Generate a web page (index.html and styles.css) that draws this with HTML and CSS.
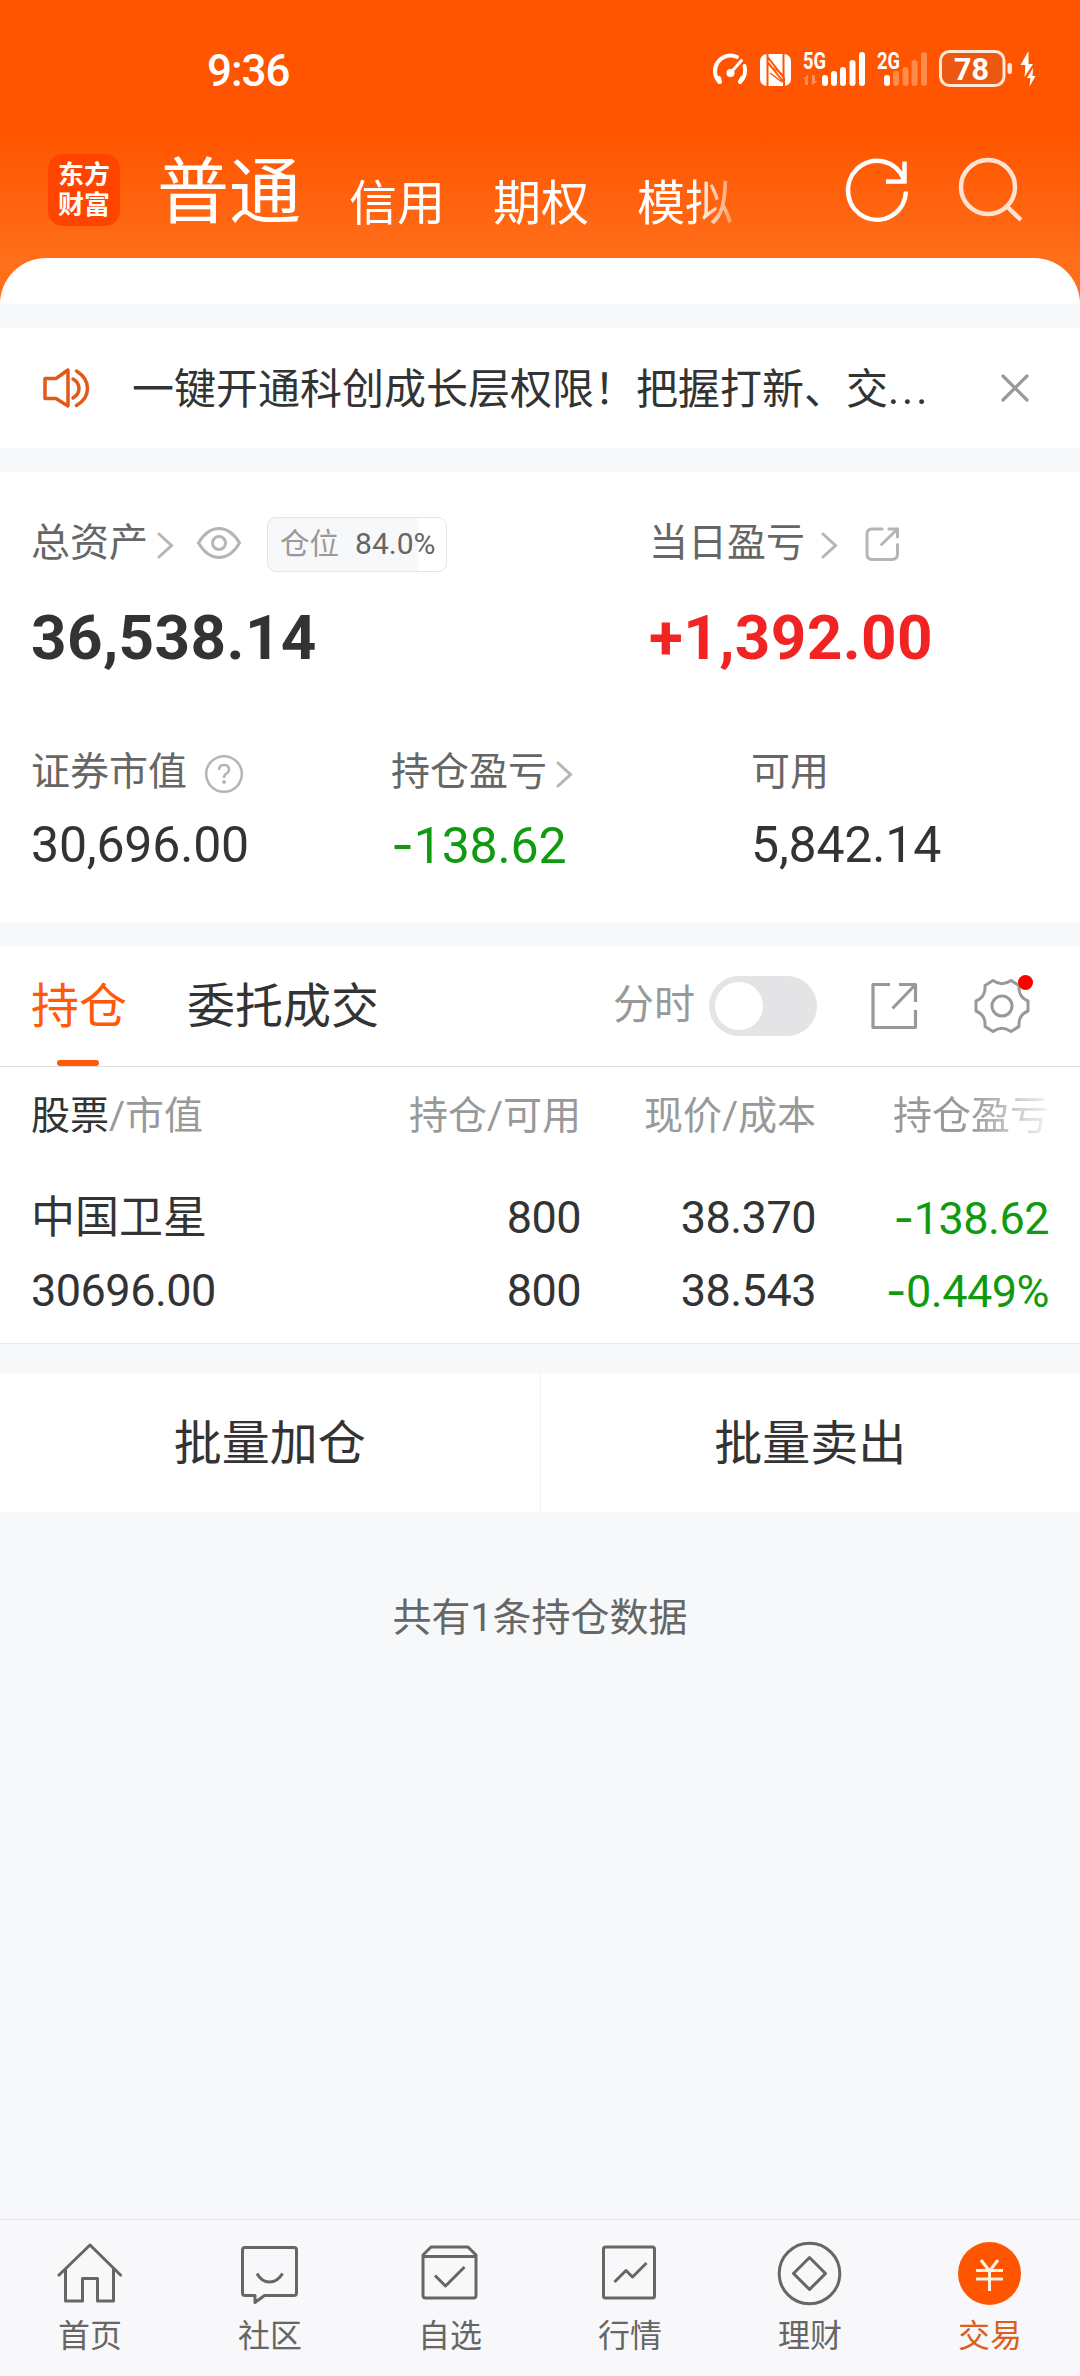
FILE: index.html
```html
<!DOCTYPE html>
<html lang="zh-CN">
<head>
<meta charset="utf-8">
<title>交易</title>
<link rel="stylesheet" href="styles.css">
</head>
<body>
<div class="page">
  <div class="header">
    <div class="status">
      <span class="time">9:36</span>
      <svg class="status-icons" viewBox="710 48 330 42" width="330" height="42">
        <g fill="none" stroke="#fff" stroke-width="4" stroke-linecap="round">
          <path d="M719.5 82A15.5 15.5 0 0 1 737 57"/>
          <path d="M744.500 66A15.500 15.500 0 0 1 740 82"/>
          <path d="M730 73.500L741.500 60.500" stroke-width="3"/>
          <path d="M719 78l1 4M742 78l-2 4"/>
        </g>
        <circle cx="730.500" cy="73" r="4" fill="#fff"/>
        <rect x="760" y="54" width="31" height="32" rx="7" fill="#fff"/>
        <path d="M767.500 86V57L784 78V86M783.500 54V82L767.500 62V54" fill="none" stroke="#ff5500" stroke-width="2"/>
        <path d="M770 66l12 8M770 73l12 9" stroke="#ff5500" stroke-width="1.500"/>
        <text x="803" y="69" class="net" textLength="23" lengthAdjust="spacingAndGlyphs">5G</text>
        <path d="M808 75v10h-3v-6h-2zM812 85V75h3v6h3z" fill="#fff" opacity=".35"/>
        <g stroke="#fff" stroke-width="6" stroke-linecap="round">
          <path d="M825 78v5M834 74v9M843 70v13M852.500 63v20M862 55v28"/>
          <path d="M887 78v5"/>
        </g>
        <text x="877" y="69" class="net" textLength="23" lengthAdjust="spacingAndGlyphs">2G</text>
        <path d="M896 74v9M905.500 70v13M914.500 63v20M924 55v28" stroke="#ff8b4d" stroke-width="6" stroke-linecap="round"/>
        <rect x="940.500" y="51.500" width="63.500" height="34" rx="9" fill="#dc5a1c" fill-opacity=".6" stroke="#ffe8d5" stroke-width="3"/>
        <text x="954" y="80" class="bat" textLength="35" lengthAdjust="spacingAndGlyphs">78</text>
        <rect x="1007.500" y="63" width="4.500" height="11" rx="2" fill="#ffe8d5"/>
        <path d="M1028.500 51l-8 14h5l-1 12 8.500-13h-4.500zM1033 68l-6 10h3.500l-1 8.500 6-10.500h-3z" fill="#fff"/>
      </svg>
    </div>
    <div class="topbar">
      <div class="logo">东方<br>财富</div>
      <div class="accounts">
        <span class="on">普通</span>
        <span>信用</span>
        <span>期权</span>
        <span>模拟</span>
      </div>
      <svg class="refresh" viewBox="0 0 68 68" width="68" height="68" fill="none" stroke="#fff" stroke-width="4.500">
        <path d="M63 34.500A29 29.500 0 1 1 61 22.500"/>
        <path d="M61.500 4.500V24.500H43"/>
      </svg>
      <svg class="search" viewBox="0 0 68 68" width="68" height="68" fill="none" stroke="#ffe2cf" stroke-width="4.500">
        <circle cx="31" cy="30" r="27"/>
        <path d="M50.500 50L64 63"/>
      </svg>
    </div>
    <div class="sheet"></div>
  </div>

  <div class="notice">
    <svg viewBox="0 0 48 44" width="48" height="44" fill="none" stroke="#e25a1b" stroke-width="3.500" stroke-linecap="round" stroke-linejoin="round">
      <path d="M3 12.500H14L26 4V40L14 32.500H3z"/>
      <path d="M31 13Q37 16.500 37 22.500T31 32"/>
      <path d="M34.500 5Q45.500 12 45.500 22.500T34.500 39.500"/>
    </svg>
    <span class="notice-text">一键开通科创成长层权限！把握打新、交<span class="dots">...</span></span>
    <svg class="close" viewBox="0 0 30 30" width="30" height="30" stroke="#999" stroke-width="3.200" stroke-linecap="round"><path d="M3 3L27 27M27 3L3 27"/></svg>
  </div>

  <div class="assets">
    <div class="total">
      <div class="col">
        <div class="label">总资产
          <svg class="chev" viewBox="0 0 18 28" width="18" height="28"><path d="M3 3L15.500 14.500L3 26"/></svg>
          <svg class="eye" viewBox="0 0 46 34" width="46" height="34" fill="none" stroke="#b5b5b5" stroke-width="3">
            <path d="M2.500 17Q11 2.500 23 2.500T43.500 17Q35 31.500 23 31.500T2.500 17z"/>
            <circle cx="23" cy="17" r="6.500"/>
          </svg>
          <span class="ratio">仓位<b>84.0%</b></span>
        </div>
        <div class="big">36,538.14</div>
      </div>
      <div class="col">
        <div class="label">当日盈亏
          <svg class="chev wide" viewBox="0 0 18 28" width="18" height="28"><path d="M3 3L15.500 14.500L3 26"/></svg>
          <svg class="share-sm" viewBox="0 0 36 36" width="36" height="36" fill="none" stroke="#b5b5b5" stroke-width="3" stroke-linecap="round">
            <path d="M18 3H8Q3 3 3 8V28Q3 33.500 8 33.500H28Q33.500 33.500 33.500 28V18.500"/>
            <path d="M25 3H33.500V11M33 3.500L17.500 18.500"/>
          </svg>
        </div>
        <div class="big red">+1,392.00</div>
      </div>
    </div>
    <div class="detail">
      <div>
        <div class="label">证券市值
          <svg class="help" viewBox="0 0 40 40" width="40" height="40">
            <circle cx="20" cy="20" r="17.800" fill="none" stroke="#b5b5b5" stroke-width="2.500"/>
            <path d="M15 16Q15 11 20 11T25 15.500Q25 18 22.500 19.500T20 24" fill="none" stroke="#b5b5b5" stroke-width="2.500"/>
            <circle cx="20" cy="28" r="1.900" fill="#b5b5b5"/>
          </svg>
        </div>
        <div class="num">30,696.00</div>
      </div>
      <div>
        <div class="label">持仓盈亏<svg class="chev" viewBox="0 0 18 28" width="18" height="28"><path d="M3 3L15.500 14.500L3 26"/></svg></div>
        <div class="num green"><i>-</i>138.62</div>
      </div>
      <div>
        <div class="label">可用</div>
        <div class="num">5,842.14</div>
      </div>
    </div>
  </div>

  <div class="holdings">
    <div class="tabs">
      <span class="tab active">持仓</span>
      <span class="tab">委托成交</span>
      <span class="switch-label">分时</span>
      <span class="switch"></span>
      <svg class="share" viewBox="0 0 50 50" width="50" height="50" fill="none" stroke="#999" stroke-width="3.200" stroke-linejoin="round">
        <path d="M20 3.500H3V46.500H45.500V29"/>
        <path d="M29 3.500H45.500V21M45 4L22.500 27.500"/>
      </svg>
      <span class="gear">
        <svg viewBox="0 0 56 56" width="56" height="56" fill="none" stroke="#999" stroke-width="3" stroke-linejoin="round">
          <path d="M19 2.500Q28 9 37 2.500L45 7.500Q44 19 54 23V33Q44 37 45 48.500L37 53.500Q28 47 19 53.500L11 48.500Q12 37 2 33V23Q12 19 11 7.500z"/>
          <circle cx="28" cy="28" r="10"/>
        </svg>
      </span>
    </div>
    <div class="grid head">
      <span><em>股票</em>/市值</span><span>持仓/可用</span><span>现价/成本</span><span class="fade">持仓盈亏</span>
    </div>
    <div class="grid row">
      <span class="name">中国卫星</span><span>800</span><span>38.370</span><span class="green"><i>-</i>138.62</span>
      <span>30696.00</span><span>800</span><span>38.543</span><span class="green"><i>-</i>0.449%</span>
    </div>
  </div>

  <div class="batch">
    <span>批量加仓</span>
    <span>批量卖出</span>
  </div>
  <div class="summary">共有1条持仓数据</div>

  <div class="nav">
    <div class="item">
      <svg viewBox="0 0 66 66"><path d="M1 36L33 5L64.500 36"/><path d="M8.500 29V61H25.500V38.500H40.500V61H56.500V29"/></svg>
      首页
    </div>
    <div class="item">
      <svg viewBox="0 0 66 66"><path d="M8 7.500H57Q59.500 7.500 59.500 10V53Q59.500 55.500 57 55.500H27.500L18 62.500V55.500H8Q5.500 55.500 5.500 53V10Q5.500 7.500 8 7.500z"/><path d="M20 33.500Q24.500 42 32.500 42T45.500 33.500"/></svg>
      社区
    </div>
    <div class="item">
      <svg viewBox="0 0 66 66"><path d="M6 15L14 7H51L59 15V55Q59 58 56.500 58H8.500Q6 58 6 55zM6 16.500H59M18 35.500L28.500 46L47.500 27"/></svg>
      自选
    </div>
    <div class="item">
      <svg viewBox="0 0 66 66"><rect x="6.500" y="7" width="51" height="51" rx="2"/><path d="M17.500 42L29 30.500L35.500 37L49.500 23"/></svg>
      行情
    </div>
    <div class="item">
      <svg viewBox="0 0 66 66"><circle cx="32.500" cy="33.500" r="30.300"/><path d="M32.500 17.500L48.500 33.500L32.500 49.500L16.500 33.500z"/></svg>
      理财
    </div>
    <div class="item current">
      <svg viewBox="0 0 66 66"><circle class="disc" cx="32.500" cy="33.500" r="31.500"/><path class="yen" d="M24 20L32.500 31L41 20M19 30.500H46M19 39H46M32.500 30V51"/></svg>
      交易
    </div>
  </div>
</div>
</body>
</html>
```

FILE: styles.css
```css
*
{
    box-sizing: border-box;
}

body
{
    margin: 0;
    background: #f7f8fa;
    font-family: Roboto, "Noto Sans CJK SC", sans-serif;
    color: #333;
}

svg
{
    display: block;
    flex: none;
}

i
{
    font-family: Inter, sans-serif;
    font-style: normal;
}

em
{
    font-style: normal;
    color: #333;
}

.page
{
    width: 1080px;
    height: 2376px;
    display: flex;
    flex-direction: column;
    overflow: hidden;
    white-space: nowrap;
}

/* header */

.header
{
    height: 304px;
    background: linear-gradient(#ff5500 0, #ff5500 135px, #ff6e1a 258px, #ff701c 304px);
    color: #fff;
}

.status
{
    height: 118px;
    padding: 48px 40px 0 207px;
    display: flex;
    justify-content: space-between;
}

.time
{
    font-size: 44px;
    font-weight: 500;
    line-height: 46px;
    letter-spacing: -1px;
}

.net
{
    font-size: 23px;
    font-weight: 700;
    fill: #fff;
}

.bat
{
    font-size: 32px;
    font-weight: 700;
    fill: #fff;
}

.topbar
{
    height: 140px;
    padding-left: 48px;
    display: flex;
}

.logo
{
    width: 72px;
    height: 72px;
    margin-top: 36px;
    padding-top: 6px;
    border-radius: 15px;
    background: #ff4400;
    font-size: 26px;
    font-weight: 700;
    line-height: 30px;
    text-align: center;
}

.accounts
{
    width: 640px;
    height: 120px;
    padding: 4px 0 0 37px;
    display: flex;
    align-items: flex-start;
    gap: 48px;
    font-size: 48px;
    line-height: 164px;
    -webkit-mask-image: linear-gradient(90deg, #000 575px, transparent 635px);
    mask-image: linear-gradient(90deg, #000 575px, transparent 635px);
}

.accounts .on
{
    font-size: 72px;
    line-height: 142px;
}

.refresh
{
    margin: 39px 0 0 83px;
}

.search
{
    margin: 39px 0 0 46px;
}

.sheet
{
    height: 46px;
    background: #fff;
    border-radius: 48px 48px 0 0;
}

/* notice */

.notice
{
    height: 120px;
    margin: 24px 0;
    padding: 0 50px 0 42px;
    background: #fff;
    display: flex;
    align-items: center;
}

.notice-text
{
    flex: 1;
    margin-left: 42px;
    padding-top: 3px;
    font-size: 42px;
    line-height: 117px;
}

.dots
{
    letter-spacing: 3px;
}

/* assets */

.assets
{
    height: 450px;
    padding-left: 31px;
    background: #fff;
}

.total
{
    height: 254px;
    padding-top: 41px;
    display: grid;
    grid-template-columns: 618px 1fr;
}

.label
{
    height: 60px;
    display: flex;
    align-items: center;
    font-size: 39px;
    line-height: 60px;
    color: #666;
}

.chev
{
    margin: 4px 0 0 8px;
    fill: none;
    stroke: #b5b5b5;
    stroke-width: 3;
    stroke-linecap: round;
}

.chev.wide
{
    margin-left: 15px;
}

.eye
{
    margin-left: 22px;
}

.share-sm
{
    margin: 2px 0 0 26px;
}

.help
{
    margin: 3px 0 0 17px;
}

.ratio
{
    width: 180px;
    height: 55px;
    margin: 2px 0 0 25px;
    padding-left: 12px;
    border: 1px solid #e4e4e6;
    border-radius: 9px;
    background: linear-gradient(90deg, #f7f8fa 84%, #fff 84%);
    font-size: 29.5px;
    line-height: 51px;
    color: #999;
}

.ratio b
{
    margin-left: 16px;
    font-weight: 400;
    font-size: 30px;
    color: #666;
}

.big
{
    margin-top: 29px;
    font-size: 62px;
    font-weight: 700;
    line-height: 72px;
    letter-spacing: .4px;
}

.detail
{
    display: grid;
    grid-template-columns: 360px 360px 1fr;
    padding-top: 16px;
}

.num
{
    margin-top: 13px;
    font-size: 50px;
    line-height: 60px;
    letter-spacing: -.2px;
}

.red
{
    color: #f12323;
}

.green
{
    color: #109a10;
}

/* holdings */

.holdings
{
    height: 398px;
    margin-top: 24px;
    background: #fff;
    border-bottom: 1px solid #e8e8ea;
}

.tabs
{
    height: 121px;
    padding-left: 31px;
    border-bottom: 1px solid #dedee0;
    display: flex;
    align-items: center;
}

.tab
{
    height: 120px;
    margin-right: 60px;
    position: relative;
    font-size: 48px;
    line-height: 122px;
}

.tab.active
{
    color: #ff5a0a;
}

.tab.active::after
{
    content: "";
    position: absolute;
    left: 26px;
    bottom: 0;
    width: 42px;
    height: 6px;
    border-radius: 3px;
    background: #ff5a0a;
}

.switch-label
{
    margin-left: 174px;
    font-size: 41px;
    line-height: 48px;
    padding-bottom: 2px;
    color: #999;
}

.switch
{
    width: 108px;
    height: 60px;
    margin-left: 14px;
    padding: 6px;
    border-radius: 30px;
    background: #e4e4e6;
}

.switch::before
{
    content: "";
    display: block;
    width: 48px;
    height: 48px;
    border-radius: 50%;
    background: #fff;
}

.share
{
    margin-left: 53px;
}

.gear
{
    margin-left: 54px;
    position: relative;
}

.gear::after
{
    content: "";
    position: absolute;
    right: -3px;
    top: -3px;
    width: 15px;
    height: 15px;
    border-radius: 50%;
    background: #f00;
}

.grid
{
    padding-left: 31px;
    display: grid;
    grid-template-columns: 300px 250px 235px 233px;
    text-align: right;
}

.grid span:nth-child(4n+1)
{
    text-align: left;
}

.head
{
    height: 115px;
    font-size: 39px;
    line-height: 99px;
    color: #999;
}

.fade
{
    -webkit-mask-image: linear-gradient(90deg, #000 155px, transparent 245px);
    mask-image: linear-gradient(90deg, #000 155px, transparent 245px);
}

.row
{
    font-size: 45px;
    line-height: 72px;
    letter-spacing: -.5px;
}

.row .name
{
    padding-top: 1px;
    font-size: 44px;
    letter-spacing: 0;
    line-height: 71px;
}

/* bottom part */

.batch
{
    height: 138px;
    margin-top: 30px;
    background: #fff;
    display: flex;
    font-size: 48px;
    line-height: 140px;
    text-align: center;
}

.batch span
{
    flex: 1;
}

.batch span + span
{
    border-left: 1px solid #f1f1f3;
}

.summary
{
    margin-top: 78px;
    font-size: 39px;
    line-height: 56px;
    text-align: center;
    color: #666;
}

.nav
{
    height: 157px;
    margin-top: auto;
    padding-top: 20px;
    border-top: 1px solid #e2e3e5;
    background: #f8f8fa;
    display: grid;
    grid-template-columns: repeat(6, 1fr);
}

.item
{
    display: flex;
    flex-direction: column;
    align-items: center;
    font-size: 32px;
    line-height: 61px;
    color: #666;
}

.item svg
{
    width: 66px;
    height: 66px;
    fill: none;
    stroke: #666;
    stroke-width: 3;
    stroke-linejoin: round;
}

.current
{
    color: #d9601f;
}

.item .disc
{
    fill: #ff5500;
    stroke: none;
}

.item .yen
{
    stroke: #fff3e2;
}
```
